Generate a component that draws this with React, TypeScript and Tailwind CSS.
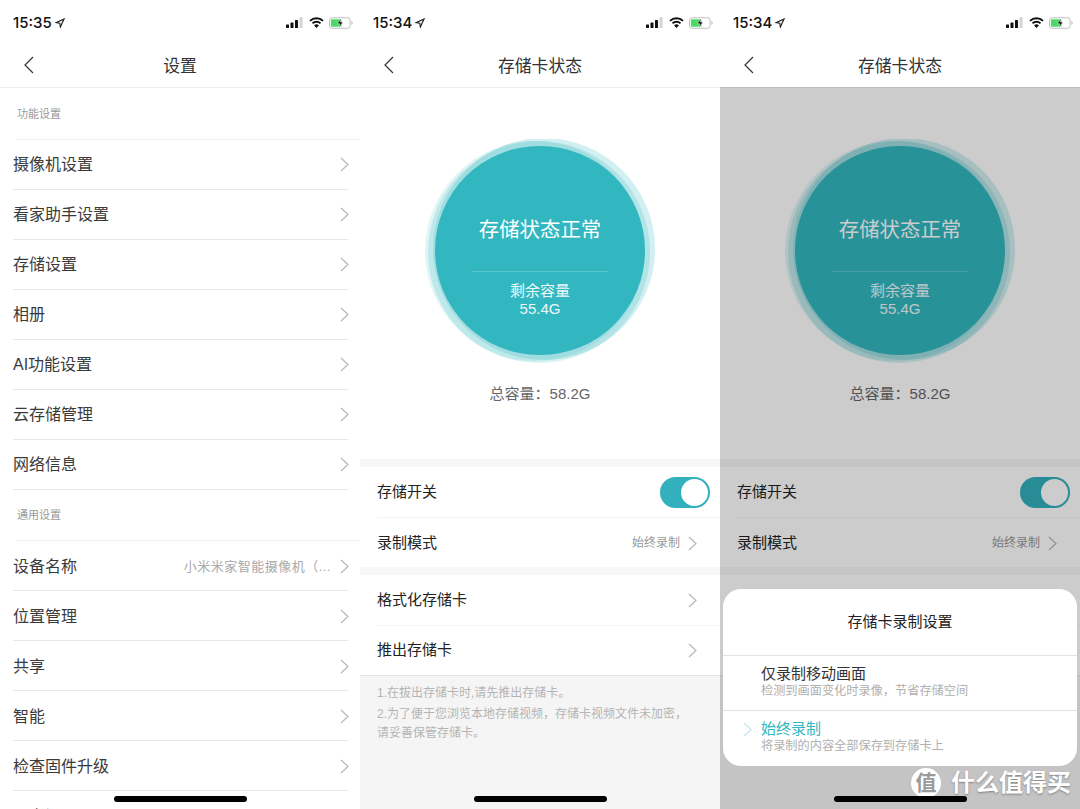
import React from 'react';

const cjk = "font-['Liberation_Sans','Noto_Sans_CJK_SC',sans-serif]";

function Chevron({ className = 'text-[#b4b4b4]' }: { className?: string }) {
  return (
    <svg className={`w-[9px] h-[15px] shrink-0 ${className}`} viewBox="0 0 9 15" fill="none" stroke="currentColor" strokeWidth="1.1">
      <path d="M1 1l7 6.5L1 14" />
    </svg>
  );
}

function StatusBar({ time }: { time: string }) {
  return (
    <div className="h-[44px] flex items-center justify-between pl-[13px] pr-[7px] pt-[1px]">
      <div className="flex items-center gap-[3px] pt-[1px]">
        <span className="font-['Inter',sans-serif] text-[15px] font-medium text-[#111]">{time}</span>
        <svg className="w-[10px] h-[10px]" viewBox="0 0 10 10" fill="none" stroke="#222" strokeWidth="1.2">
          <path d="M9 1L1 4.6l3.8.6.6 3.8z" />
        </svg>
      </div>
      <div className="flex items-center">
        <svg className="w-[17px] h-[11px]" viewBox="0 0 17 11">
          <rect x="0" y="7.5" width="3" height="3.5" rx="0.6" fill="#111" />
          <rect x="4.5" y="5.5" width="3" height="5.5" rx="0.6" fill="#111" />
          <rect x="9" y="3" width="3" height="8" rx="0.6" fill="#111" />
          <rect x="13.5" y="0" width="3" height="11" rx="0.6" fill="#d4d4d4" />
        </svg>
        <svg className="w-[15px] h-[11px] ml-[6px]" viewBox="0 0 15 11" fill="none" stroke="#111" strokeWidth="2">
          <path d="M1 3.9a9.3 9.3 0 0 1 13 0" />
          <path d="M3.5 6.4a5.7 5.7 0 0 1 8 0" />
          <path d="M7.5 11l-2.4-2.4a3.3 3.3 0 0 1 4.8 0z" fill="#111" stroke="none" />
        </svg>
        <svg className="w-[24px] h-[12px] ml-[5px]" viewBox="0 0 25 12">
          <rect x="0.5" y="0.5" width="21.5" height="11" rx="2.6" fill="#fff" stroke="#bdbdbd" />
          <rect x="2" y="2" width="11" height="8" rx="1.2" fill="#4cd964" />
          <path d="M23.3 4.2c.9.3 1.4 1 1.4 1.8s-.5 1.5-1.4 1.8z" fill="#bdbdbd" />
          <path d="M12.8 1L8.6 6.8h2.7L10.2 11l4.4-6h-2.7z" fill="#111" stroke="#fff" strokeWidth="0.5" />
        </svg>
      </div>
    </div>
  );
}

function Header({ title }: { title: string }) {
  return (
    <div className="h-[44px] border-b border-[#ececec] flex items-center justify-center relative">
      <svg className="absolute left-[24px] top-[12px] w-[10px] h-[18px]" viewBox="0 0 10 18" fill="none" stroke="#333" strokeWidth="1.2">
        <path d="M9 1L1 9l8 8" />
      </svg>
      <span className="text-[16.8px] text-[#333] pt-[3px]">{title}</span>
    </div>
  );
}

function HomeBar() {
  return <div className="absolute left-[114px] top-[796px] w-[133px] h-[6px] rounded-full bg-black z-30" />;
}

function SectionTitle({ title, height }: { title: string; height: string }) {
  return (
    <div className={`${height} ml-[17px] border-b border-[#ececec] flex items-center pt-[1px]`}>
      <span className="text-[11px] text-[#9a9a9a]">{title}</span>
    </div>
  );
}

function SettingRow({ label, value, pad = 'pt-[1px]' }: { label: string; value?: string; pad?: string }) {
  return (
    <div className={`h-[50px] mx-[12px] ml-[13px] border-b border-[#e6e6e6] flex items-center justify-between ${pad}`}>
      <span className="text-[16px] text-[#3a3a3a]">{label}</span>
      <div className="flex items-center gap-[9px] -mr-[1px] -mt-[1px]">
        {value && <span className="text-[13px] tracking-[0.5px] text-[#aaaaaa]">{value}</span>}
        <Chevron />
      </div>
    </div>
  );
}

function SettingsPanel() {
  return (
    <div className="relative w-[360px] h-[809px] overflow-hidden bg-white shrink-0">
      <StatusBar time="15:35" />
      <Header title="设置" />
      <SectionTitle title="功能设置" height="h-[52px]" />
      {['摄像机设置', '看家助手设置', '存储设置', '相册', 'AI功能设置', '云存储管理', '网络信息'].map((label) => (
        <SettingRow key={label} label={label} />
      ))}
      <SectionTitle title="通用设置" height="h-[51px]" />
      <SettingRow label="设备名称" value="小米米家智能摄像机（..." pad="pt-[3px]" />
      {['位置管理', '共享', '智能', '检查固件升级', '更多设置'].map((label) => (
        <SettingRow key={label} label={label} pad="pt-[3px]" />
      ))}
      <HomeBar />
    </div>
  );
}

function StorageCircle() {
  return (
    <div className="relative w-[232px] h-[226px] flex items-center justify-center">
      <svg className="absolute inset-0 w-full h-full" viewBox="0 0 232 226">
        <circle cx="115" cy="113" r="111" fill="#32b7c0" fillOpacity="0.2" />
        <circle cx="120" cy="110" r="111" fill="#32b7c0" fillOpacity="0.22" />
        <circle cx="111" cy="112" r="110" fill="#32b7c0" fillOpacity="0.14" />
      </svg>
      <div className="relative w-[210px] h-[209px] -mt-[3px] rounded-full bg-[#32b7c0] flex flex-col items-center text-white">
        <span className="mt-[70px] text-[20.4px] leading-[28px]">存储状态正常</span>
        <div className="mt-[27px] w-[136px] border-t border-white/20" />
        <span className="mt-[10px] text-[15px] leading-[18px] text-white/90">剩余容量</span>
        <span className="text-[15px] leading-[18px] text-white/90">55.4G</span>
      </div>
    </div>
  );
}

function StorageRow({ label, height, children }: { label: string; height: string; children: React.ReactNode }) {
  return (
    <div className={`${height} pl-[17px] pr-[23px] flex items-center justify-between`}>
      <span className="text-[15px] text-[#222]">{label}</span>
      {children}
    </div>
  );
}

function StoragePanel({ time }: { time: string }) {
  return (
    <>
      <StatusBar time={time} />
      <Header title="存储卡状态" />
      <div className="h-[371px] pt-[51px] flex flex-col items-center">
        <StorageCircle />
        <span className="mt-[18px] text-[15px] text-[#666]">总容量：58.2G</span>
      </div>
      <div className="h-[8px] bg-[#f7f7f7]" />
      <div className="border-b border-[#f4f4f4] ml-[17px]">
        <div className="h-[50px] -ml-[17px] pl-[17px] pr-[10px] flex items-center justify-between">
          <span className="text-[15px] text-[#222]">存储开关</span>
          <div className="w-[50px] h-[31px] rounded-full bg-[#32b0bd] p-[2px] flex justify-end">
            <div className="w-[27px] h-[27px] rounded-full bg-white" />
          </div>
        </div>
      </div>
      <StorageRow label="录制模式" height="h-[49px] pt-[1px]">
        <div className="flex items-center gap-[8px]">
          <span className="text-[12px] text-[#999]">始终录制</span>
          <Chevron />
        </div>
      </StorageRow>
      <div className="h-[8px] bg-[#f7f7f7]" />
      <StorageRow label="格式化存储卡" height="h-[50px] pt-[1px]">
        <Chevron />
      </StorageRow>
      <div className="ml-[17px] border-t border-[#f4f4f4]" />
      <StorageRow label="推出存储卡" height="h-[49px]">
        <Chevron />
      </StorageRow>
      <div className="h-[134px] bg-[#f5f5f5] border-t border-[#e2e2e2] pl-[17px] pr-[30px] pt-[8px] text-[12px] leading-[19.5px] text-[#b4b4b4]">
        <p>1.在拔出存储卡时,请先推出存储卡。</p>
        <p className="mt-[1px]">2.为了便于您浏览本地存储视频，存储卡视频文件未加密，请妥善保管存储卡。</p>
      </div>
    </>
  );
}

function SheetOption({ title, desc, active }: { title: string; desc: string; active?: boolean }) {
  return (
    <div className="relative h-[54px] pl-[38px] pt-[9px]">
      {active && (
        <div className="absolute left-[20px] top-[11px]">
          <Chevron className="text-[#bfe6ea]" />
        </div>
      )}
      <p className={`text-[15px] leading-[18px] ${active ? 'text-[#32b7c0]' : 'text-[#333]'}`}>{title}</p>
      <p className="text-[12.2px] leading-[16px] text-[#b0b0b0]">{desc}</p>
    </div>
  );
}

function Watermark() {
  return (
    <div className="absolute left-[191px] top-[681px] flex items-center gap-[10px]">
      <div className="w-[30px] h-[30px] rounded-full bg-white flex items-center justify-center">
        <span className="text-[21px] font-bold text-[#9a9a9a]">值</span>
      </div>
      <span className="text-[24px] leading-[30px] font-bold text-white [text-shadow:0_1px_2px_rgba(0,0,0,0.35)]">什么值得买</span>
    </div>
  );
}

function DialogPanel() {
  return (
    <div className="relative w-[360px] h-[809px] overflow-hidden bg-white shrink-0">
      <StoragePanel time="15:34" />
      <div className="absolute inset-x-0 top-[87px] bottom-0 bg-black/20 z-10">
        <div className="absolute left-[3px] top-[502px] w-[354px] h-[177px] rounded-[18px] bg-white overflow-hidden">
          <div className="h-[67px] border-b border-[#e2e2e2] flex items-center justify-center">
            <span className="text-[15px] text-[#222]">存储卡录制设置</span>
          </div>
          <div className="border-b border-[#e2e2e2]">
            <SheetOption title="仅录制移动画面" desc="检测到画面变化时录像，节省存储空间" />
          </div>
          <SheetOption title="始终录制" desc="将录制的内容全部保存到存储卡上" active />
        </div>
        <Watermark />
      </div>
      <HomeBar />
    </div>
  );
}

export default function App() {
  return (
    <div className={`flex w-[1080px] h-[809px] overflow-hidden bg-white ${cjk}`}>
      <SettingsPanel />
      <div className="relative w-[360px] h-[809px] overflow-hidden bg-white shrink-0">
        <StoragePanel time="15:34" />
        <HomeBar />
      </div>
      <DialogPanel />
    </div>
  );
}
